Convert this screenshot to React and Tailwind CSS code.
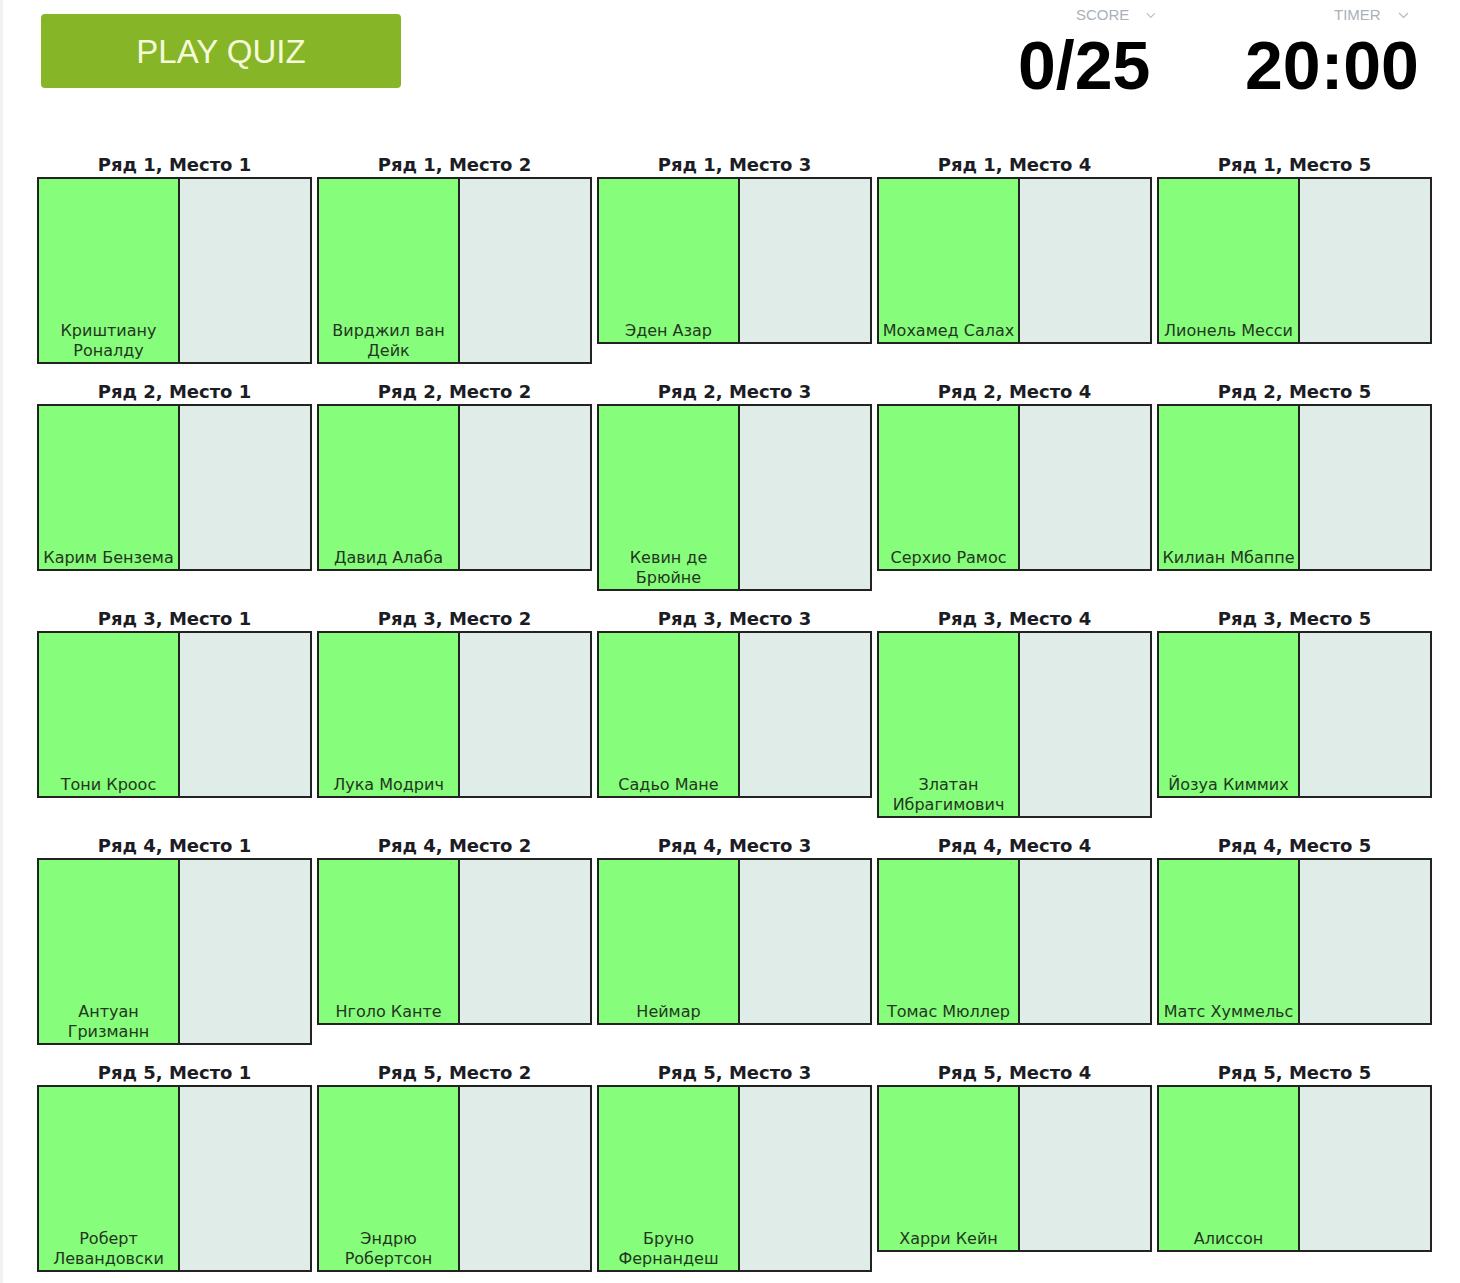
import React from 'react'

const rows = [
  [['Криштиану', 'Роналду'], ['Вирджил ван', 'Дейк'], ['Эден Азар'], ['Мохамед Салах'], ['Лионель Месси']],
  [['Карим Бензема'], ['Давид Алаба'], ['Кевин де', 'Брюйне'], ['Серхио Рамос'], ['Килиан Мбаппе']],
  [['Тони Кроос'], ['Лука Модрич'], ['Садьо Мане'], ['Златан', 'Ибрагимович'], ['Йозуа Киммих']],
  [['Антуан', 'Гризманн'], ['Нголо Канте'], ['Неймар'], ['Томас Мюллер'], ['Матс Хуммельс']],
  [['Роберт', 'Левандовски'], ['Эндрю', 'Робертсон'], ['Бруно', 'Фернандеш'], ['Харри Кейн'], ['Алиссон']],
]

function Chevron() {
  return (
    <svg width="11" height="7" viewBox="0 0 11 7" fill="none" className="ml-[17px]">
      <path d="M1 1l4.5 4.5L10 1" stroke="#b4b9c0" strokeWidth="1.2" />
    </svg>
  )
}

function Stat({ label, value, labelPad, width }) {
  return (
    <div className="flex flex-col" style={{ width }}>
      <div className="flex items-center h-5 mt-[5px]" style={{ paddingLeft: labelPad }}>
        <span className="text-[15px] leading-5 text-[#aab0b8]">{label}</span>
        <Chevron />
      </div>
      <div className="mt-[6px] text-[68px] leading-[68px] font-bold text-black whitespace-nowrap">
        {value}
      </div>
    </div>
  )
}

function Seat({ title, lines }) {
  return (
    <div>
      <div className="h-6 leading-6 text-center font-bold text-[18px] text-[#1c1c24] whitespace-nowrap">
        {title}
      </div>
      <div className="flex border-2 border-[#222]">
        <div className="w-[141px] shrink-0 bg-[#86fd7b] border-r-2 border-[#222] flex flex-col">
          <div className="h-[142px]" />
          {lines.map((l, i) => (
            <div key={i} className="text-center text-[16px] leading-5 text-[#24361f] whitespace-nowrap">
              {l}
            </div>
          ))}
          <div className="h-px" />
        </div>
        <div className="flex-1 bg-[#dfece7]" />
      </div>
    </div>
  )
}

export default function App() {
  return (
    <div
      className="min-h-screen bg-white border-l-[3px] border-[#f1f1f1]"
      style={{ fontFamily: '"DejaVu Sans", Verdana, sans-serif' }}
    >
      <div className="h-[153px] flex justify-between" style={{ fontFamily: '"Liberation Sans", Arial, sans-serif' }}>
        <button className="ml-[38px] mt-[14px] w-[360px] h-[74px] rounded-[4px] bg-[#86b527] text-[#f5fbd9] text-[33px] leading-none">
          PLAY QUIZ
        </button>
        <div className="flex gap-[89px] mr-[42px]">
          <Stat label="SCORE" value="0/25" labelPad={58} width={138} />
          <Stat label="TIMER" value="20:00" labelPad={89} width={173} />
        </div>
      </div>
      <div className="ml-[34px] grid grid-cols-[repeat(5,275px)] gap-x-[5px] gap-y-4 items-start pb-4">
        {rows.map((row, r) =>
          row.map((lines, c) => (
            <Seat key={`${r}-${c}`} title={`Ряд ${r + 1}, Место ${c + 1}`} lines={lines} />
          ))
        )}
      </div>
    </div>
  )
}
